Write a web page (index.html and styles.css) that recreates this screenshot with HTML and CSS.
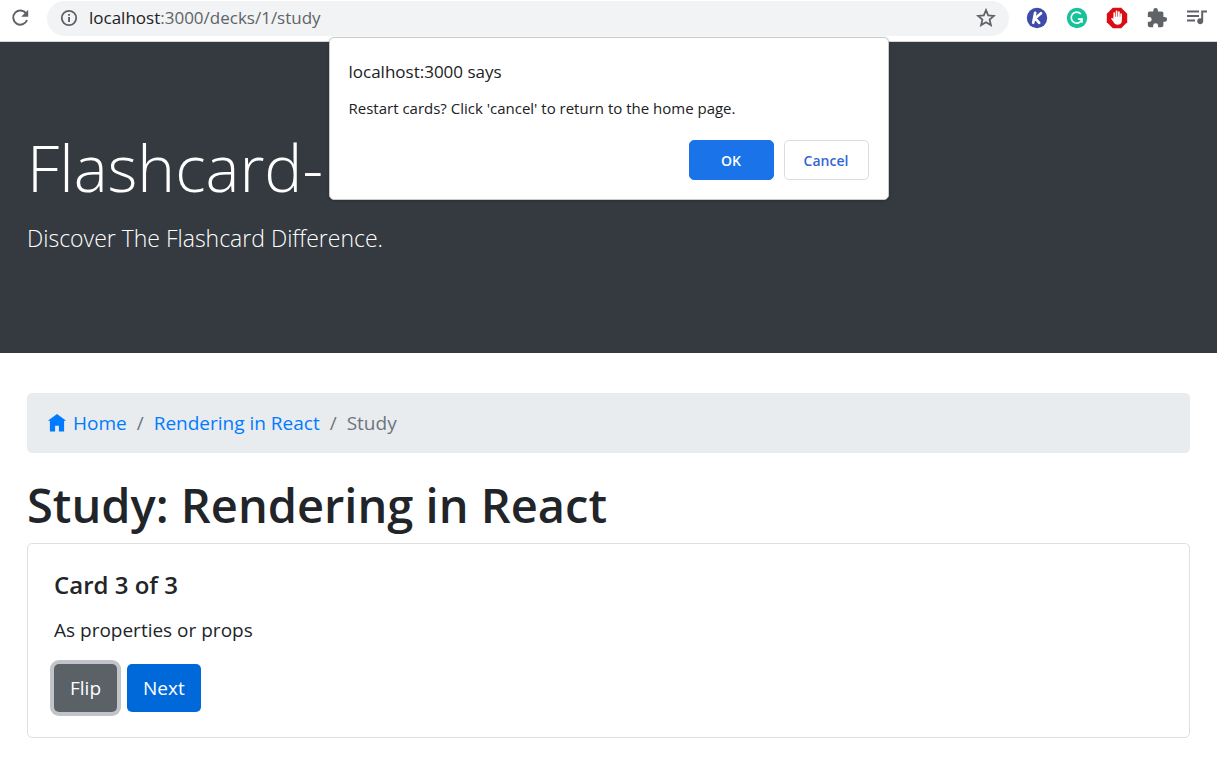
FILE: index.html
```html
<!DOCTYPE html>
<html lang="en">
<head>
<meta charset="utf-8">
<title>Study: Rendering in React</title>
<link rel="stylesheet" href="styles.css">
</head>
<body>
<header class="toolbar">
  <button class="icon-btn reload" aria-label="Reload">
    <svg width="20" height="20" viewBox="0 0 20 20"><path d="M16.2 5.6A7.1 7.1 0 1 0 17 12" fill="none" stroke="#5f6368" stroke-width="2"/><path d="M18.2 1.8v6.9h-7z" fill="#5f6368"/></svg>
  </button>
  <div class="omnibox">
    <svg width="18" height="18" viewBox="0 0 18 18"><circle cx="9" cy="9" r="7.2" fill="none" stroke="#5f6368" stroke-width="1.8"/><path d="M8.1 8h1.9v5H8.1zM8.1 4.9h1.9v1.9H8.1z" fill="#5f6368"/></svg>
    <span class="url"><span class="host">localhost</span>:3000/decks/1/study</span>
    <button class="icon-btn" aria-label="Bookmark">
      <svg width="20" height="20" viewBox="0 0 20 20"><path d="M10 2.2l2.2 5.2 5.7.5-4.3 3.7 1.3 5.5-4.9-2.9-4.9 2.9 1.3-5.500-4.300-3.700 5.700-.500z" fill="none" stroke="#5f6368" stroke-width="1.8"/></svg>
    </button>
  </div>
  <div class="extensions">
    <button class="icon-btn" aria-label="Keyword extension">
      <svg width="22" height="22" viewBox="0 0 22 22"><circle cx="11" cy="11" r="10.2" fill="#3f4caa"/><path d="M9.200 5.800L7.200 15.800M15 6.300l-5.800 5 4 4.500" fill="none" stroke="#fff" stroke-width="2.700" stroke-linecap="round" stroke-linejoin="round"/></svg>
    </button>
    <button class="icon-btn" aria-label="Grammar extension">
      <svg width="22" height="22" viewBox="0 0 22 22"><circle cx="11" cy="11" r="10.2" fill="#15c39a"/><path d="M14.800 7A5.500 5.500 0 1 0 16 12.200h-4.100M16 11.800v4" fill="none" stroke="#fff" stroke-width="1.700"/></svg>
    </button>
    <button class="icon-btn" aria-label="Ad blocker">
      <svg width="22" height="22" viewBox="0 0 22 22"><path d="M6.800.8h8.400l6 6v8.400l-6 6H6.800l-6-6V6.800z" fill="#dc0d12"/><path d="M8.300 11V6M10.600 10V4.400M12.900 10V5M15.100 11V7" stroke="#fff" stroke-width="1.700" stroke-linecap="round"/><path d="M7.500 9.800h8.400v3.300c0 2.800-1.400 4.700-4 4.700-2.400 0-3.400-1-4.400-2.800L5.300 12c-.3-.9.8-1.300 1.400-.7l.8.9z" fill="#fff"/></svg>
    </button>
    <button class="icon-btn" aria-label="Extensions">
      <svg width="22" height="22" viewBox="0 0 24 24"><path d="M20.500 11H19V7c0-1.100-.9-2-2-2h-4V3.500a2.500 2.500 0 0 0-5 0V5H4c-1.100 0-2 .9-2 2v3.800h1.500a2.700 2.700 0 0 1 0 5.400H2V20c0 1.100.9 2 2 2h3.800v-1.500a2.700 2.700 0 0 1 5.400 0V22H17c1.100 0 2-.9 2-2v-4h1.500a2.500 2.500 0 0 0 0-5z" fill="#5f6368"/></svg>
    </button>
    <button class="icon-btn" aria-label="Media controls">
      <svg width="22" height="22" viewBox="0 0 22 22"><path d="M1 4.500h12M1 9h12M1 13.500h8" stroke="#5f6368" stroke-width="2"/><path d="M15.200 3.500H21v2h-3.800v8.700a3 3 0 1 1-2-2.800z" fill="#5f6368"/></svg>
    </button>
  </div>
</header>

<section class="hero">
  <h1 class="hero-title">Flashcard-</h1>
  <p class="hero-lead">Discover The Flashcard Difference.</p>
</section>

<main class="content">
  <nav class="breadcrumb" aria-label="Breadcrumb">
    <a class="home" href="#"><svg width="20" height="20" viewBox="0 0 20 20"><path d="M10 1L.8 7.800h2.100V18.500h5.200v-5.700h3.800v5.700h5.200V7.800h2.100z" fill="#007bff"/></svg>Home</a>
    <span>/</span>
    <a href="#">Rendering in React</a>
    <span>/</span>
    <span>Study</span>
  </nav>
  <h2 class="page-title">Study: Rendering in React</h2>
  <article class="card">
    <h3 class="card-title">Card 3 of 3</h3>
    <p class="card-text">As properties or props</p>
    <div class="actions">
      <button class="btn btn-flip">Flip</button>
      <button class="btn btn-next">Next</button>
    </div>
  </article>
</main>

<div class="dialog" role="alertdialog" aria-labelledby="dialog-title" aria-describedby="dialog-text">
  <h2 class="dialog-title" id="dialog-title">localhost:3000 says</h2>
  <p class="dialog-text" id="dialog-text">Restart cards? Click 'cancel' to return to the home page.</p>
  <div class="dialog-actions">
    <button class="dialog-btn primary">OK</button>
    <button class="dialog-btn">Cancel</button>
  </div>
</div>
</body>
</html>
```
FILE: styles.css
```css
* {
  box-sizing: border-box;
}

body {
  margin: 0;
  background: #fff;
  color: #212529;
  font-family: "Open Sans", "Noto Sans", sans-serif;
  font-size: 19px;
  line-height: 30px;
}

h1, h2, h3, p {
  margin: 0;
}

button {
  font-family: inherit;
  cursor: pointer;
}

svg {
  display: block;
  flex: none;
}

a {
  color: #007bff;
  text-decoration: none;
}

.toolbar {
  display: flex;
  align-items: center;
  height: 42px;
  padding: 0 9px 5px 10px;
  border-bottom: 1px solid #d5d7da;
}

.icon-btn {
  padding: 0;
  border: 0;
  background: none;
}

.omnibox {
  display: flex;
  flex: 1;
  align-items: center;
  gap: 11px;
  height: 35px;
  margin: 0 17px;
  padding: 0 13px 0 13px;
  border-radius: 18px;
  background: #f1f3f4;
}

.url {
  flex: 1;
  color: #5f6368;
  font-size: 17px;
}

.host {
  color: #202124;
}

.extensions {
  display: flex;
  gap: 18px;
}

.hero {
  padding: 80px 27px;
  background: #343a40;
  color: #fff;
  font-weight: 300;
}

.hero-title {
  margin-bottom: 5px;
  font-size: 64px;
  font-weight: 300;
  line-height: 92px;
}

.hero-lead {
  margin-bottom: 16px;
  font-size: 23px;
  line-height: 38px;
}

.content {
  padding: 40px 27px 24px;
}

.breadcrumb {
  display: flex;
  gap: 10px;
  margin-bottom: 22px;
  padding: 15px 20px;
  border-radius: 5px;
  background: #e9ecef;
  color: #6c757d;
}

.home {
  display: flex;
  align-items: center;
  gap: 6px;
}

.page-title {
  margin-bottom: 8px;
  font-size: 47px;
  font-weight: 600;
  line-height: 60px;
}

.card {
  padding: 26px 26px 25px;
  border: 1px solid #dfdfdf;
  border-radius: 5px;
}

.card-title {
  margin-bottom: 15px;
  font-size: 24px;
  font-weight: 600;
  line-height: 30px;
}

.card-text {
  margin-bottom: 19px;
}

.actions {
  display: flex;
  gap: 10px;
}

.btn {
  height: 48px;
  padding: 0 16px;
  border: 0;
  border-radius: 5px;
  color: #fff;
  font-size: 19px;
}

.btn-flip {
  background: #5a6268;
  box-shadow: 0 0 0 4px #c1c5c9;
}

.btn-next {
  background: #0069d9;
}

.dialog {
  position: absolute;
  top: 37px;
  right: 0;
  left: 0;
  width: 560px;
  margin: 0 auto;
  padding: 20px 19px 19px;
  border: 1px solid #c8cacc;
  border-radius: 5px;
  background: #fff;
  box-shadow: 0 1px 3px #0003;
  color: #202124;
}

.dialog-title {
  margin-bottom: 10px;
  font-size: 17px;
  font-weight: 400;
  line-height: 28px;
}

.dialog-text {
  margin-bottom: 20px;
  font-size: 15px;
  line-height: 24px;
}

.dialog-actions {
  display: flex;
  justify-content: flex-end;
  gap: 10px;
}

.dialog-btn {
  width: 85px;
  height: 40px;
  padding: 0;
  border: 1px solid #dadce0;
  border-radius: 5px;
  background: #fff;
  color: #3367d6;
  font-size: 14px;
  font-weight: 600;
}

.primary {
  border-color: #1a73e8;
  background: #1a73e8;
  color: #fff;
}
```
